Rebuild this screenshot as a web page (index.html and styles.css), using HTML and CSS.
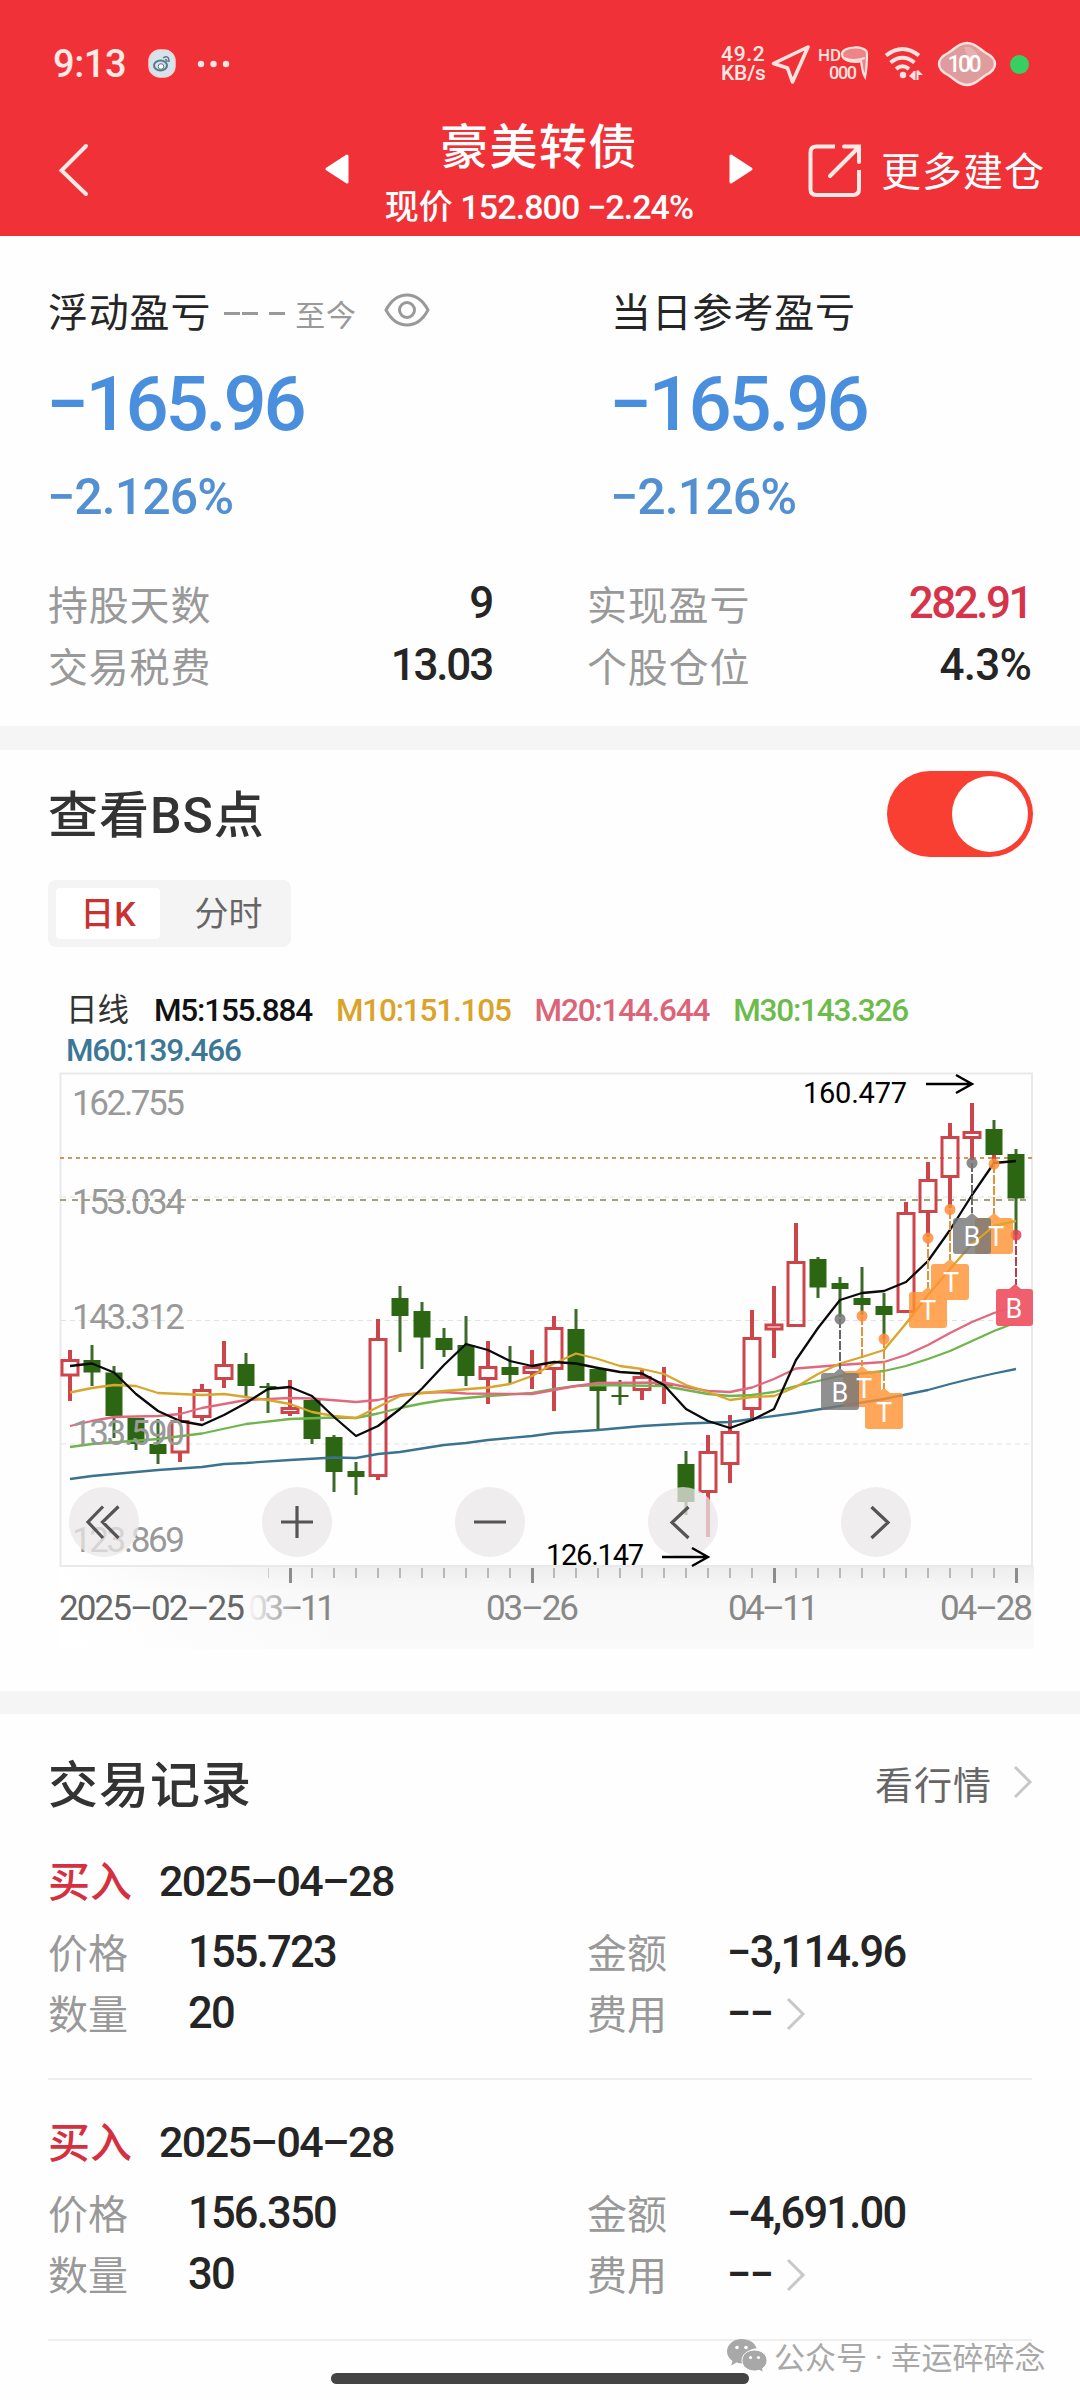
FILE: index.html
```html
<!DOCTYPE html>
<html lang="zh-CN">
<head>
<meta charset="utf-8">
<title>豪美转债</title>
<link rel="stylesheet" href="styles.css">
</head>
<body>
<header class="header">
  <div class="status">
    <span class="clock">9:13</span>
    <svg class="app-dot" width="28" height="30" viewBox="0 0 28 30"><rect x="1" y="1" width="26" height="27" rx="11" fill="#d3e4ec" stroke="#f7d3d2" stroke-width="1.5"/><ellipse cx="12.500" cy="16.500" rx="6.500" ry="5" fill="none" stroke="#5b7686" stroke-width="2"/><circle cx="13" cy="17.500" r="2.800" fill="#fff" stroke="#5b7686"/><path d="M15 9q6-4 6 4M17 11q2-1 2 2" fill="none" stroke="#5b7686" stroke-width="1.500"/></svg>
    <svg class="more" width="34" height="10" viewBox="0 0 34 10" fill="#ffe3de"><circle cx="4" cy="5" r="3.200"/><circle cx="16.500" cy="5" r="3.200"/><circle cx="29" cy="5" r="3.200"/></svg>
    <span class="speed"><b>49.2</b><b>KB/s</b></span>
    <svg class="st-loc" width="40" height="42" viewBox="0 0 40 42"><path d="M37 4 2.500 20.500 16.500 25 21.500 39z" fill="none" stroke="#ffe3de" stroke-width="3.600" stroke-linejoin="round"/></svg>
    <svg class="st-hd" width="52" height="44" viewBox="0 -4 52 44"><text x="0" y="14.500" class="hd" textLength="23">HD</text><text x="11" y="33" class="zeros" textLength="28">000</text><path d="M24 8c0-8 25-9 25-1 0 4 0 15-2 24-3-5-3-11-4-16-5 2-19 1-19-7z" fill="#ee8488" stroke="#ffe3de" stroke-width="2.200"/><path d="M26 12q9 4 21 0" fill="none" stroke="#ffe3de" stroke-width="2"/></svg>
    <svg class="st-wifi" width="40" height="36" viewBox="0 0 40 36" fill="none" stroke="#ffe3de" stroke-width="4"><path d="M2 9.500Q18.500-3.500 35 9.500M6.500 16.500Q18.500 7 30.500 16.500M12 23Q18.500 17.500 25 23"/><circle cx="19" cy="29" r="3.200" fill="#ffe3de" stroke="none"/><path d="M30.500 25V34M33.500 24.500V34" stroke-width="2"/><path d="M30 25v9l-5-4zM34 24l5 5h-5z" fill="#ffe3de" stroke="none"/></svg>
    <svg class="st-bat" width="60" height="46" viewBox="0 0 60 46"><path d="M30 2C39 2 42 8 49 12c6 3 9 7 9 11s-3 8-9 11c-7 4-10 10-19 10s-12-6-19-10c-6-3-9-7-9-11s3-8 9-11C18 8 21 2 30 2z" fill="#df9c9c" stroke="#ffe3de" stroke-width="2.400"/><path d="M27 6q8-2 14 8l-8 8z" fill="#e8bcb8" opacity=".7"/><text x="10.500" y="31" class="bat" textLength="34">100</text></svg>
    <i class="live"></i>
  </div>
  <nav class="nav">
    <svg class="back" width="32" height="54" viewBox="0 0 32 54"><path d="M28 3 3.500 27.500 28 51" fill="none" stroke="#ffe9e4" stroke-width="4" stroke-linecap="round"/></svg>
    <svg class="prev" width="26" height="32" viewBox="0 0 26 32"><path d="M23 3v26L3 16z" fill="#fff" stroke="#fff" stroke-width="3" stroke-linejoin="round"/></svg>
    <div class="title"><h1>豪美转债</h1><p><span>现价</span> 152.800 −2.24%</p></div>
    <svg class="next" width="26" height="32" viewBox="0 0 26 32"><path d="M3 3v26l20-13z" fill="#fff" stroke="#fff" stroke-width="3" stroke-linejoin="round"/></svg>
    <svg class="share" width="56" height="56" viewBox="0 0 56 56" fill="none" stroke="#ffe9e4" stroke-width="4"><path d="M28 3.500H9.500q-6 0-6 6V46q0 6 6 6H46q6 0 6-6V27"/><path d="M37 3.500h15V19M51 5 23 33" stroke-linecap="round"/></svg>
    <span class="build">更多建仓</span>
  </nav>
</header>

<section class="summary">
  <div class="profits">
    <div class="profit">
      <p class="p-label">浮动盈亏<span class="range"><i></i><i></i><i class="sep"></i>至今</span>
        <svg width="46" height="34" viewBox="0 0 46 34" fill="none" stroke="#999" stroke-width="3"><path d="M2 17Q10 2 23 2t21 15Q36 32 23 32T2 17z"/><circle cx="23" cy="17" r="7.500"/></svg></p>
      <p class="p-value">−165.96</p>
      <p class="p-rate">−2.126%</p>
    </div>
    <div class="profit">
      <p class="p-label">当日参考盈亏</p>
      <p class="p-value">−165.96</p>
      <p class="p-rate">−2.126%</p>
    </div>
  </div>
  <dl class="stats">
    <div><dt>持股天数</dt><dd>9</dd></div>
    <div><dt>实现盈亏</dt><dd class="up">282.91</dd></div>
    <div><dt>交易税费</dt><dd>13.03</dd></div>
    <div><dt>个股仓位</dt><dd class="pct">4.3%</dd></div>
  </dl>
</section>

<section class="bs">
  <div class="bs-head"><h2>查看BS点</h2><span class="toggle"><i></i></span></div>
  <div class="tabs"><span class="tab on">日K</span><span class="tab">分时</span></div>
  <div class="legend"><span class="l-day">日线</span><span class="l5">M5:155.884</span><span class="l10">M10:151.105</span><span class="l20">M20:144.644</span><span class="l30">M30:143.326</span><span class="l60">M60:139.466</span></div>
  <svg class="chart" width="1080" height="600" viewBox="0 10 1080 600">
    <defs>
      <linearGradient id="axisFade" x1="0" x2="1" y1="0" y2="0"><stop offset="0" stop-color="#fff"/><stop offset=".3" stop-color="#fff" stop-opacity="0"/></linearGradient>
      <linearGradient id="axisBg" x1="0" x2="0" y1="0" y2="1"><stop offset="0" stop-color="#ededed"/><stop offset=".3" stop-color="#f8f8f8"/><stop offset="1" stop-color="#fafafa"/></linearGradient>
      <linearGradient id="dateFade" gradientUnits="userSpaceOnUse" x1="245" x2="300" y1="0" y2="0"><stop offset="0" stop-color="#fff"/><stop offset="1" stop-color="#888"/></linearGradient>
    </defs>
    <rect x="60" y="506" width="974" height="83" fill="url(#axisBg)"/>
    <rect x="60" y="506" width="974" height="83" fill="url(#axisFade)"/>
    <rect x="60.500" y="13.500" width="971.500" height="492.500" fill="#fefefe" stroke="#e9e9e9" stroke-width="2"/>
    <path d="M61 137H1031M61 260.500H1031M61 384H1031" stroke="#e2e2e2" stroke-dasharray="5 4"/>
    <path d="M60 98H1032" stroke="#c89a5c" stroke-width="2" stroke-dasharray="4 4"/>
    <path d="M60 140H1032" stroke="#a5a07c" stroke-width="2" stroke-dasharray="6 6"/>

    <g class="down-wick">
      <path d="M92 285V326M114 306V378M136 358V390M158 359V404M246 293V336M268 323V353M312 338V384M334 375V432M356 402V435M400 226V292M422 242V309M444 268V297M466 256V326M510 286V324M576 249V321M598 309V369M620 320V345M686 391V455M818 197V238M840 217V257M862 207V255M884 233V279M994 60V102M1016 89V175"/>
    </g>
    <g class="down-body">
      <path d="M83.500 300h17v12.500h-17zM105.500 312.500h17V356h-17zM127.500 358h17v26h-17zM149.500 384h17v10h-17zM237.500 304h17v22h-17zM259.500 326h17v2h-17zM303.500 340h17v39h-17zM325.500 377h17v35h-17zM347.500 411h17v6h-17zM391.500 238h17v18h-17zM413.500 251h17v26.500h-17zM435.500 278h17v12h-17zM457.500 285h17v31h-17zM501.500 307h17v8h-17zM567.500 269h17v52h-17zM589.500 309h17v22h-17zM611.500 335h17v2h-17zM677.500 404h17v38h-17zM809.500 199h17v28.500h-17zM831.500 223h17v6h-17zM853.500 238h17v7h-17zM875.500 246h17v9h-17zM985.500 69h17v26h-17zM1007.500 94h17v44.500h-17z"/>
    </g>
    <g class="up">
      <path class="wick" d="M70 290v9M70 316v25M180 347v13M180 393v9M202 324v5M202 358v3M224 281v23M224 320v8M290 320v27M290 354v2M378 259v19M378 417v3M488 281v25M488 320v24M532 290v16M532 314v15M554 256v11M554 310v41M642 309v7M642 331v9M664 307v37M708 375v16M708 433v44M730 355v16M730 405v18M752 250v27M752 350v11M774 226v38M774 270v28M796 163v38M906 142v10M928 102v17M928 153v24M950 63v13M950 118v30M972 43v28M972 79v21M994 95v6"/>
      <path class="box" d="M62 300.500h16V315H62zM172 361.500h16V392h-16zM194 330.500h16V356.500h-16zM216 305.500h16V318.500h-16zM282 348.500h16V352.500h-16zM370 279.500h16V415.500h-16zM480 307.500h16V318.500h-16zM524 307.500h16V312.500h-16zM546 268.500h16V308.500h-16zM634 317.500h16V329.500h-16zM700 392.500h16V431.500h-16zM722 372.500h16V403.500h-16zM744 278.500h16V348.500h-16zM766 265h16V269h-16zM788 202.500h16V265.500h-16zM898 153.500h16V251.500h-16zM920 120.500h16V151.500h-16zM942 77.500h16V116.500h-16zM964 72.500h16V77.500h-16z"/>
      <path class="wick thin" d="M655 325h18"/>
    </g>

    <g class="ma">
      <polyline stroke="#3a7390" points="70,419 92,416 158,410 202,407 224,404 246,403 290,400 334,397.500 356,398 378,394 400,392 422,388.500 444,385 466,383 488,380 532,376 554,373 598,370 642,366 686,363.500 730,362 752,359 796,353 840,346 884,339 928,330 950,324 972,318.500 994,313.500 1016,309"/>
      <polyline stroke="#6fb54c" points="70,387 92,384 158,379 202,373.500 246,364 290,359 334,357.500 356,358 378,353.500 400,348 422,343.500 444,340 488,336 532,333 554,329 576,326 598,325 664,326 686,330 708,334 730,336 752,335 774,332 796,326 840,316 884,311 906,306 928,299 950,291 972,281 994,271 1016,262.500"/>
      <polyline stroke="#df6a80" points="70,366 92,361 114,357 158,356 180,354 202,348 224,344 246,340 290,338 312,338.500 356,342 378,340 400,335 422,333 444,332 466,333.500 532,334 554,330 576,326 598,323 664,322.500 686,327 708,331 730,332 752,327.500 774,319 796,308.500 840,305 884,302 906,295 928,285 950,273 972,262 994,253 1016,246"/>
      <polyline stroke="#d8a62c" points="70,332.500 92,328 114,325 136,326 158,333 202,335 224,334 246,337 268,340 290,344 312,352 334,356 356,358 378,347 400,336 422,333 444,331 488,327.500 510,324 532,316 554,303.500 576,293.500 598,299 620,306 642,309 664,314 686,325 708,332 730,340 752,337 774,336 796,327 818,314 840,303.500 862,297 884,290 906,263.500 928,235 950,209 972,184 994,166 1016,161"/>
      <polyline stroke="#0a0a0a" points="70,306 92,303.500 114,312.500 136,334 158,351 180,361 202,365 224,355 246,343 268,329 290,327 312,336 334,357 356,376 378,366 400,349 422,328.500 444,305 466,284 488,290 510,301 532,306 554,302 576,303.500 598,308 620,312 642,313.500 664,325 686,349 708,361 730,368 752,360 774,349 796,300 818,268 840,240 862,233 884,231 906,222 928,201 950,170 972,135 994,103 1016,101"/>
    </g>

    <g class="stem">
      <path stroke="#666" d="M840 259v50M972 103v50"/>
      <path stroke="#e3933c" d="M862 256v50M884 279v50M928 178v50M950 150v50M994 104v50"/>
      <path stroke="#c23b46" d="M1016 175v50"/>
    </g>
    <g class="points"><g fill="#777"><circle cx="840" cy="259" r="5.500"/><circle cx="972" cy="103" r="5.500"/></g><g fill="#ff8f3a"><circle cx="862" cy="256" r="5.500"/><circle cx="884" cy="279" r="5.500"/><circle cx="928" cy="178" r="5.500"/><circle cx="950" cy="149.500" r="5.500"/><circle cx="994" cy="104" r="5.500"/></g><circle cx="1016" cy="175" r="5.500" fill="#e0434d"/></g>
    <g class="flags">
      <path fill="#ff9233" d="M846 311h10l6-5 6 5h10q3 0 3 3v30q0 3-3 3h-32q-3 0-3-3v-30q0-3 3-3zM868 333h10l6-5 6 5h10q3 0 3 3v30q0 3-3 3h-32q-3 0-3-3v-30q0-3 3-3zM912 232h10l6-5 6 5h10q3 0 3 3v30q0 3-3 3h-32q-3 0-3-3v-30q0-3 3-3zM934 204h10l6-5 6 5h10q3 0 3 3v30q0 3-3 3h-32q-3 0-3-3v-30q0-3 3-3zM978 158h10l6-5 6 5h10q3 0 3 3v30q0 3-3 3h-32q-3 0-3-3v-30q0-3 3-3z"/>
      <path fill="#777" d="M824 313h10l6-5 6 5h10q3 0 3 3v31q0 3-3 3h-32q-3 0-3-3v-31q0-3 3-3zM956 158h10l6-5 6 5h10q3 0 3 3v30q0 3-3 3h-32q-3 0-3-3v-30q0-3 3-3z"/>
      <path class="buy" fill="#ee5a68" d="M999 229h10l6-5 6 5h9q3 0 3 3v31q0 3-3 3h-31q-3 0-3-3v-31q0-3 3-3z"/>
    </g>
    <polyline points="972,184 994,166 1016,161" fill="none" stroke="#e0a520" stroke-width="2"/>
    <g class="flag-text"><text x="840" y="342">B</text><text x="864" y="338">T</text><text x="884" y="362">T</text><text x="928" y="260">T</text><text x="951" y="232">T</text><text x="972" y="186">B</text><text x="996" y="186">T</text><text x="1014" y="258">B</text></g>

    <g class="scale"><text x="72" y="55" textLength="113">162.755</text><text x="72" y="154" textLength="113">153.034</text><text x="72" y="269" textLength="113">143.312</text><text x="72" y="385" textLength="113">133.590</text><text x="72" y="492" textLength="113">123.869</text></g>
    <g fill="#e9e7e7" fill-opacity=".75"><circle cx="104" cy="462" r="35"/><circle cx="297" cy="462" r="35"/><circle cx="490" cy="462" r="35"/><circle cx="683" cy="462" r="35"/><circle cx="876" cy="462" r="35"/></g>
    <path d="M103 446.500 88 462l15 16M118.500 446.500 102.500 462l16 16M281 462h32M297 446v32M474 462h32M688.500 447 672 462.500 688.500 478M871.500 447 888 462.500 871.500 478" fill="none" stroke="#555" stroke-width="3.200"/>
    <g class="extreme"><text x="803" y="43" textLength="104">160.477</text><text x="546" y="505" textLength="98">126.147</text></g>
    <path d="M926 24h46M956 15l16 9-16 9M662 497h46M692 488l16 9-16 9" fill="none" stroke="#000" stroke-width="2.400"/>

    <path d="M312 508v10M334 508v10M356 508v10M378 508v10M400 508v10M422 508v10M444 508v10M466 508v10M488 508v10M510 508v10M554 508v10M576 508v10M598 508v10M620 508v10M642 508v10M664 508v10M686 508v10M708 508v10M730 508v10M752 508v10M796 508v10M818 508v10M840 508v10M862 508v10M884 508v10M906 508v10M928 508v10M950 508v10M972 508v10M994 508v10" stroke="#9a9a9a" stroke-width="1.300"/>
    <path d="M268.500 508v10" stroke="#ccc"/>
    <path d="M290.500 508v15M532.500 508v15M774.500 508v15M1016.500 508v15" stroke="#8c8c8c" stroke-width="3"/>
    <g class="dates"><text x="248" y="560" textLength="88" fill="url(#dateFade)">03–11</text><text x="486" y="560" textLength="93">03–26</text><text x="728" y="560" textLength="91">04–11</text><text x="940" y="560" textLength="93">04–28</text><text x="59" y="560" textLength="186" class="first">2025–02–25</text></g>
  </svg>
</section>

<section class="trades">
  <div class="t-head"><h2>交易记录</h2><span>看行情<svg width="20" height="34" viewBox="0 0 20 34"><path d="M2 2l15 15L2 32" fill="none" stroke="#c8c8c8" stroke-width="3"/></svg></span></div>
  <article class="trade">
    <p class="t-date"><b>买入</b>2025–04–28</p>
    <dl><div><dt>价格</dt><dd>155.723</dd></div><div><dt>金额</dt><dd>−3,114.96</dd></div><div><dt>数量</dt><dd>20</dd></div><div><dt>费用</dt><dd>−−<svg width="20" height="34" viewBox="0 0 20 34"><path d="M2 2l15 15L2 32" fill="none" stroke="#c8c8c8" stroke-width="3"/></svg></dd></div></dl>
  </article>
  <article class="trade">
    <p class="t-date"><b>买入</b>2025–04–28</p>
    <dl><div><dt>价格</dt><dd>156.350</dd></div><div><dt>金额</dt><dd>−4,691.00</dd></div><div><dt>数量</dt><dd>30</dd></div><div><dt>费用</dt><dd>−−<svg width="20" height="34" viewBox="0 0 20 34"><path d="M2 2l15 15L2 32" fill="none" stroke="#c8c8c8" stroke-width="3"/></svg></dd></div></dl>
  </article>
</section>
<div class="home-bar"></div>
<div class="watermark"><svg width="42" height="34" viewBox="0 0 42 34"><path d="M15.500 1C7.500 1 1 6.500 1 13.500c0 4 2 7 5.500 9.500L5 27.500l5.500-3q5 1.500 9 .5c-3-9 5-15 11-14.500C29 4.500 23 1 15.500 1z" fill="#a8a8a8"/><path d="M28.500 12C21.500 12 16 16.500 16 22.500S21.500 33 28.500 33q2 0 4.500-.7l4.500 2-1-3.800c3-2 4.500-5 4.500-8C41 16.500 35.500 12 28.500 12z" fill="#a8a8a8" stroke="#fff"/><g fill="#fff"><circle cx="11" cy="9.500" r="1.800"/><circle cx="20" cy="9.500" r="1.800"/><circle cx="24.500" cy="19.500" r="1.600"/><circle cx="32.500" cy="19.500" r="1.600"/></g></svg><span>公众号 · 幸运碎碎念</span></div>
</body>
</html>
```
FILE: styles.css
```css
* { box-sizing: border-box; margin: 0; padding: 0; }
body {
  position: relative;
  width: 1080px;
  height: 2400px;
  overflow: hidden;
  background: #fefefe;
  color: #252525;
  font-family: Roboto, "Noto Sans CJK SC", sans-serif;
}
svg { display: block; flex: none; overflow: visible; }
i { font-style: normal; }
h1, h2 { font-weight: 500; }

/* header */
.header { height: 236px; background: #f03138; color: #fff; }
.status { display: flex; align-items: center; height: 86px; padding: 42px 0 0 53px; color: #ffe9e4; }
.clock { width: 95px; font-size: 38px; font-weight: 500; line-height: 44px; letter-spacing: -.4px; }
.more { margin-left: 21px; }
.speed { display: flex; flex-direction: column; width: 45px; margin-left: 490px; font-size: 21px; line-height: 19px; }
.speed b { font-weight: 500; letter-spacing: -.2px; }
.speed b:first-child { letter-spacing: .7px; }
.st-loc { margin-left: 5px; }
.st-hd { margin-left: 7px; }
.hd, .zeros { font-size: 17px; font-weight: 500; fill: #ffe3de; }
.zeros { font-size: 18px; }
.st-wifi { margin-left: 14px; }
.st-bat { margin-left: 13px; }
.bat { font-size: 23px; font-weight: 500; fill: #fff; }
.live { width: 19px; height: 19px; margin-left: 13px; border-radius: 50%; background: #36cf62; }

.nav { display: flex; align-items: flex-start; height: 150px; padding: 18px 0 0 58px; }
.back { margin-top: 39px; }
.prev { margin: 49px 0 0 234px; }
.title { width: 378px; padding-top: 14px; text-align: center; }
.title h1 { font-size: 48px; line-height: 60px; letter-spacing: 1.5px; }
.title p { font-size: 34px; font-weight: 500; line-height: 58px; letter-spacing: -.9px; white-space: nowrap; }
.title p span { letter-spacing: 0; }
.next { margin-top: 49px; }
.share { margin: 39px 0 0 53px; }
.build { margin-left: 18px; font-size: 40px; line-height: 60px; letter-spacing: 1px; padding-top: 39px; }

/* profit summary */
.summary { height: 490px; padding: 50px 48px 0; }
.profits { display: grid; grid-template-columns: 563px 1fr; }
.p-label { display: flex; align-items: center; height: 48px; font-size: 40px; letter-spacing: .8px; }
.range { display: flex; align-items: center; margin: 6px 27px 0 13px; color: #999; font-size: 30px; letter-spacing: .8px; }
.range i { width: 16px; height: 3px; margin-right: 2px; background: #999; }
.range .sep { margin: 0 10px 0 9px; }
.p-value { margin: 29px 0 0 -2px; color: #4a8fdd; font-size: 76px; font-weight: 500; line-height: 82px; letter-spacing: -3.200px; }
.p-rate { margin: 22px 0 0 -1px; color: #5290d2; font-size: 50px; font-weight: 500; line-height: 60px; letter-spacing: -.9px; }
.stats { display: grid; grid-template-columns: 444px 444px; column-gap: 95px; margin-top: 46px; }
.stats div { display: flex; justify-content: space-between; height: 61.500px; line-height: 61px; }
.stats dt { padding-top: 3px; color: #999; font-size: 40px; letter-spacing: .8px; }
.stats dd { font-size: 44px; font-weight: 500; letter-spacing: -2.200px; }
.stats .up { letter-spacing: -2.500px; color: #d5344a; }
.stats .pct { letter-spacing: -.8px; }

/* BS chart */
.bs { height: 965px; border-top: 24px solid #f5f5f5; }
.bs-head { display: flex; justify-content: space-between; align-items: flex-start; padding: 21px 47px 0 48px; }
h2 { color: #333; font-size: 50px; line-height: 90px; letter-spacing: 1px; }
.toggle { width: 146px; height: 86px; padding: 5px; border-radius: 43px; background: #f93f32; }
.toggle i { display: block; width: 76px; height: 76px; margin-left: auto; border-radius: 50%; background: #fff; }
.tabs { display: flex; width: 243px; height: 67px; margin: 19px 0 0 48px; padding: 8px; border-radius: 8px; background: #f4f4f4; }
.tab { flex: 1; padding-left: 14px; color: #666; font-size: 34px; line-height: 53px; text-align: center; }
.tab.on { flex: none; width: 104px; height: 51px; padding: 0; border-radius: 4px; background: #fff; color: #c8322f; font-weight: 500; }
.legend { display: flex; flex-wrap: wrap; width: 950px; height: 79px; margin: 44px 0 0 66px; font-size: 31.500px; font-weight: 500; line-height: 40px; letter-spacing: -1.200px; }
.legend span { margin-right: 24px; }
.legend .l-day { margin-right: 25px; font-weight: 400; letter-spacing: 0; color: #333; }
.l5 { color: #111; }
.l10 { color: #dba32a; }
.l20 { color: #dd6379; }
.l30 { color: #6dbb4b; }
.legend .l60 { color: #3c7796; }
.chart text { font-family: Roboto, sans-serif; }
.scale { font-size: 35px; fill: #999; }
.dates { font-size: 35px; fill: #888; }
.dates .first { fill: #666; }
.extreme { font-size: 29px; fill: #000; }
.down-wick { stroke: #3c6b2a; stroke-width: 3; }
.down-body { fill: #2c6612; }
.chart .up { fill: none; stroke: #cb454a; stroke-width: 3; }
.up .wick { stroke-width: 4; }
.up .thin { stroke-width: 2; }
.ma { fill: none; stroke-width: 2.300; stroke-linejoin: round; }
.stem { stroke-width: 2; stroke-dasharray: 9 2; }
.points { opacity: .85; }
.flags { fill-opacity: .82; }
.flags .buy { fill-opacity: .97; }
.flag-text { font-size: 27px; fill: #fff; text-anchor: middle; }

/* trade log */
.trades { border-top: 23px solid #f5f5f5; padding: 0 48px; }
.t-head { display: flex; justify-content: space-between; padding-top: 27px; }
.t-head span { display: flex; align-items: center; height: 82px; color: #666; font-size: 38px; letter-spacing: 1px; }
.t-head svg { margin: 0 -1px 0 21px; }
.trade { height: 261px; border-bottom: 2px solid #eee; }
.trade:first-of-type { height: 249px; }
.trade:first-of-type .t-date { padding-top: 20px; }
.t-date { padding-top: 32px; font-size: 43px; font-weight: 500; line-height: 60px; letter-spacing: -1.600px; }
.t-date b { margin-right: 27px; color: #d5303f; font-size: 42px; font-weight: 500; letter-spacing: 0; position: relative; top: 1px; }
.trade dl { display: grid; grid-template-columns: 539px 1fr; padding-top: 11px; }
.trade dl div { display: flex; height: 61px; line-height: 60px; }
.trade dt { width: 140px; padding-top: 2px; color: #999; font-size: 40px; }
.trade dd { display: flex; align-items: center; height: 60px; font-size: 43.500px; font-weight: 500; letter-spacing: -1.800px; }
.trade dd svg { margin-left: 14px; }

.home-bar { position: absolute; left: 331px; top: 2373px; width: 418px; height: 11px; border-radius: 6px; background: #444; }
.watermark { position: absolute; left: 726px; top: 2335px; display: flex; align-items: center; height: 40px; color: #a8a8a8; font-size: 31px; }
.watermark span { margin-left: 6px; white-space: nowrap; }
```
